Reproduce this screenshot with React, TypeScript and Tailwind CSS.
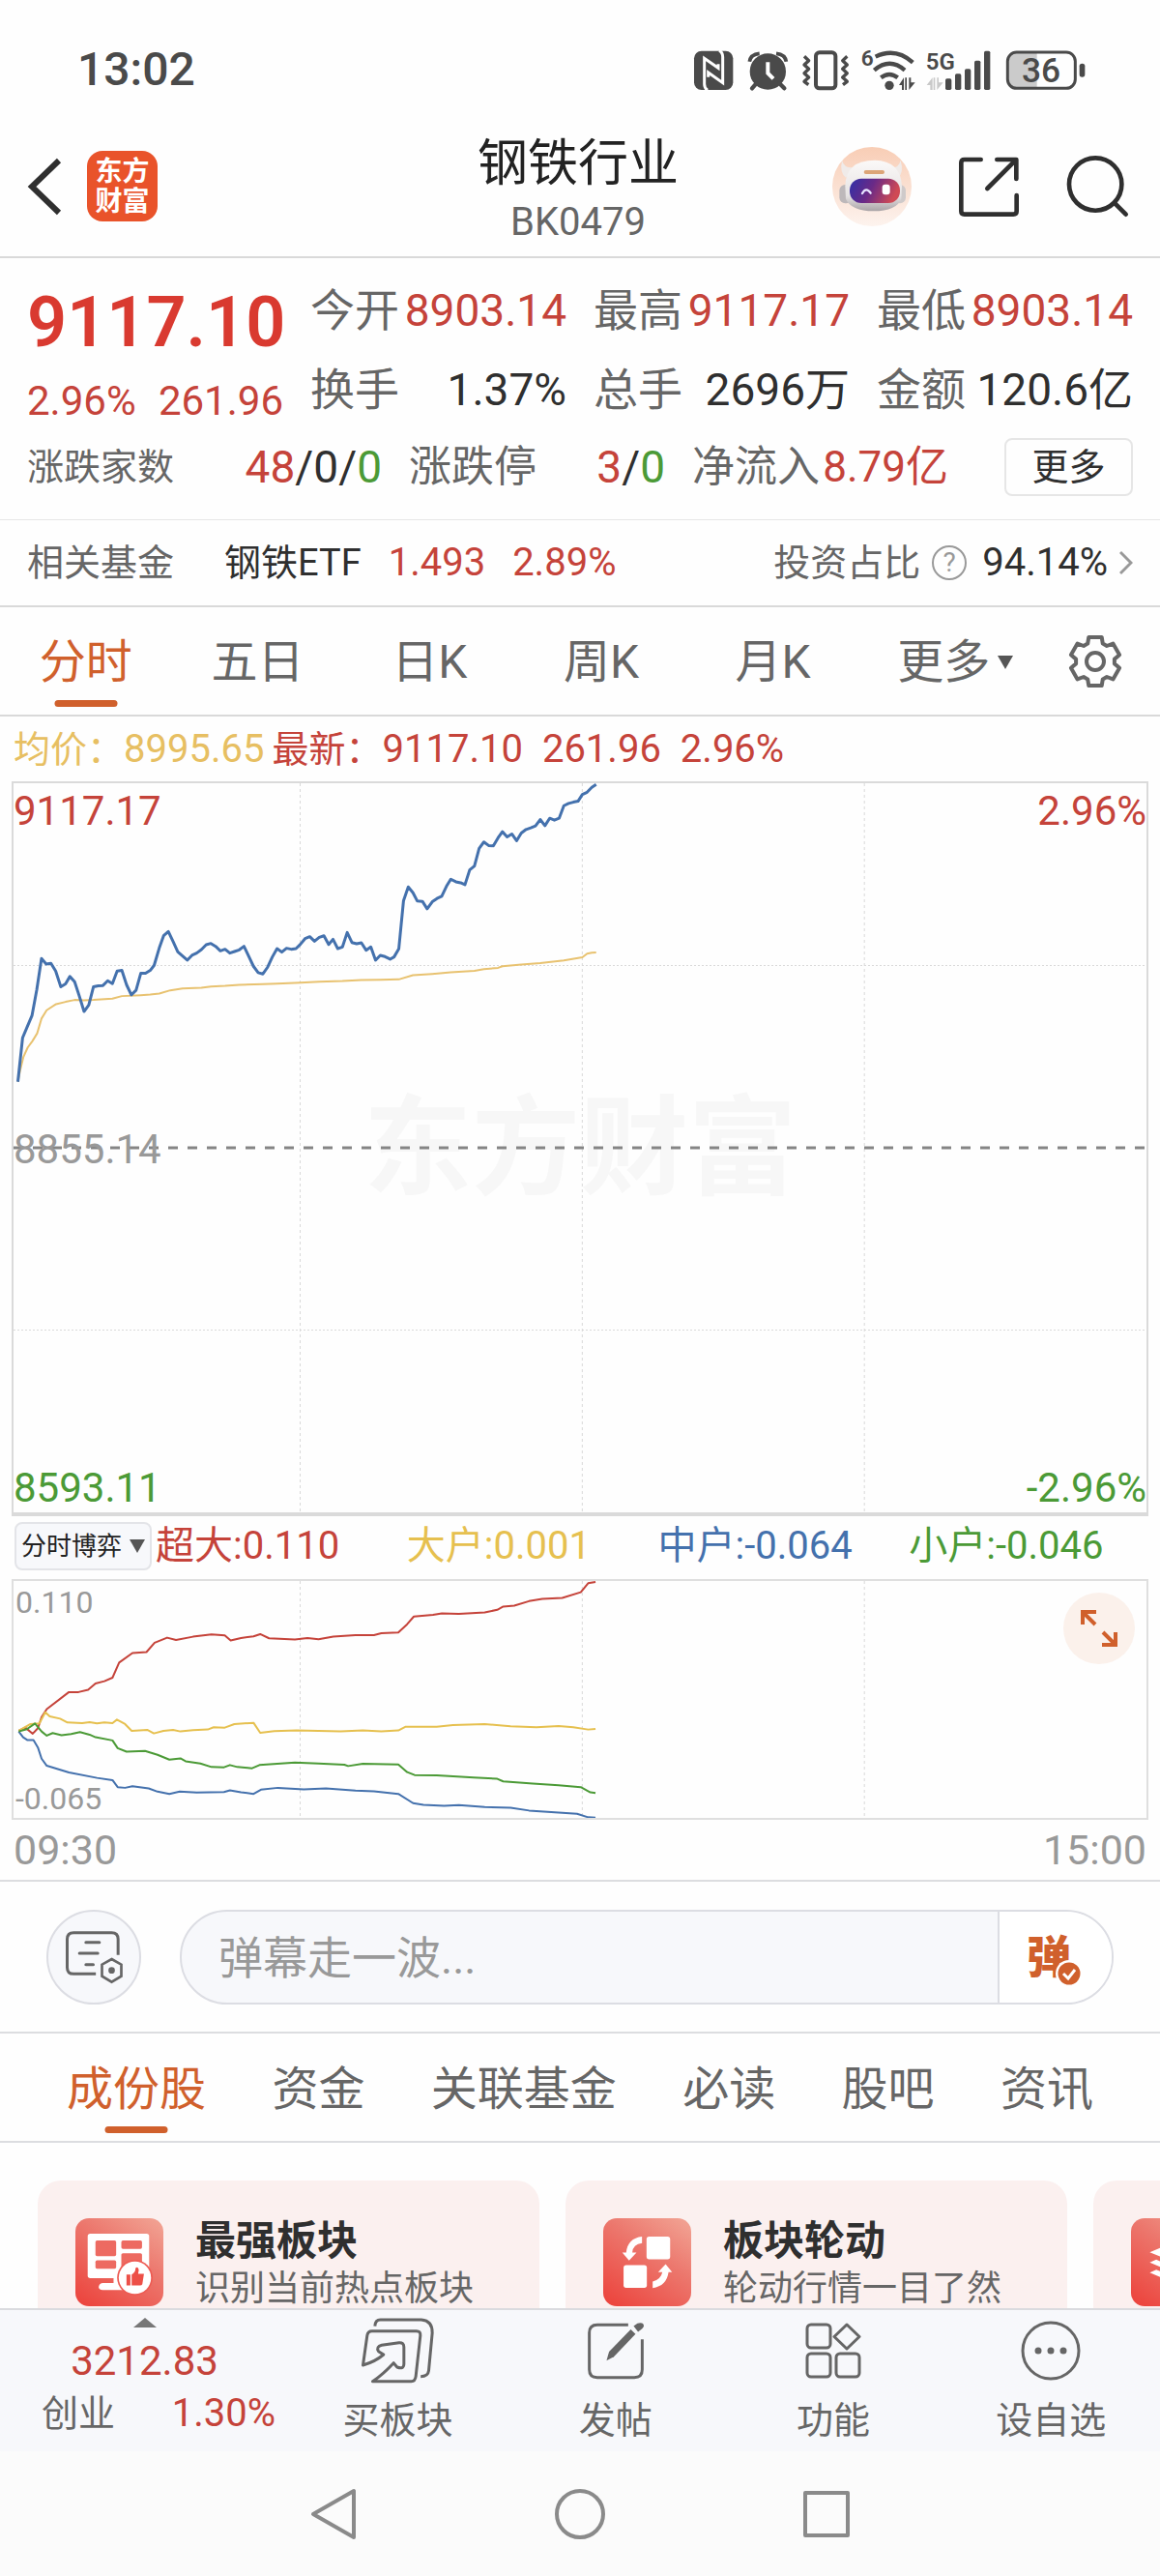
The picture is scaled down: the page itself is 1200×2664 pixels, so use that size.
import React from "react";

type Tone = "red" | "dark";

const toneClass: Record<Tone, string> = {
  red: "text-[#c5433a]",
  dark: "text-[#2f2f2f]",
};

/* ---------- data ---------- */

const stats: { label: string; value: string; tone: Tone }[][] = [
  [
    { label: "今开", value: "8903.14", tone: "red" },
    { label: "换手", value: "1.37%", tone: "dark" },
  ],
  [
    { label: "最高", value: "9117.17", tone: "red" },
    { label: "总手", value: "2696万", tone: "dark" },
  ],
  [
    { label: "最低", value: "8903.14", tone: "red" },
    { label: "金额", value: "120.6亿", tone: "dark" },
  ],
];

const periods = ["分时", "五日", "日K", "周K", "月K"];
const sections = ["成份股", "资金", "关联基金", "必读", "股吧", "资讯"];

const pricePoints =
  "43,957 55,820 67,785 79,750 91,670 103,573 115,590 127,588 139,612 152,661 164,652 175,629 187,645 199,690 211,738 223,718 235,661 247,658 259,657 271,642 283,651 295,612 307,610 319,655 331,686 343,672 355,619 367,619 379,610 389,594 402,540 413,502 425,489 437,520 449,552 461,565 473,578 485,563 497,556 509,545 521,530 533,526 545,535 557,549 569,544 581,556 593,551 605,546 617,535 629,566 641,597 653,617 665,621 677,600 689,568 701,542 713,553 725,541 737,544 749,542 760,529 772,511 784,505 796,519 808,507 820,502 832,529 843,513 855,542 867,537 879,492 891,523 903,527 915,524 927,547 939,537 951,578 963,563 975,567 988,575 998,568 1010,543 1022,393 1034,350 1046,368 1057,394 1070,395 1082,418 1095,396 1107,386 1119,379 1131,348 1142,326 1155,334 1167,337 1178,343 1190,297 1202,285 1214,230 1226,210 1238,221 1250,222 1262,197 1273,178 1285,194 1297,185 1309,206 1321,182 1333,171 1345,166 1357,160 1369,140 1381,159 1393,136 1405,142 1417,136 1429,97 1441,90 1453,86 1465,83 1476,62 1488,55 1500,40 1511,31";
const averagePoints =
  "43,957 49,920 57,880 68,850 80,830 92,806 103,760 116,734 140,715 164,708 187,702 211,703 235,702 283,698 307,690 355,687 379,685 402,682 430,672 461,666 509,664 533,660 569,658 605,655 665,653 701,651 760,648 808,645 867,643 915,640 963,639 1010,638 1046,625 1095,621 1142,616 1202,611 1226,606 1262,602 1273,597 1321,592 1369,587 1429,579 1476,569 1488,558 1500,555 1511,554";

const flows = [
  {
    label: "超大:0.110",
    text: "text-[#c5433a]",
    stroke: "#c5433a",
    points:
      "24,688 33,678 43,697 50,680 55,645 62,620 92,567 105,567 118,560 128,540 140,533 151,522 160,475 178,445 197,442 208,413 225,397 237,404 260,394 285,387 303,390 311,406 325,398 342,393 351,386 363,399 398,403 415,398 430,402 450,394 480,389 505,389 515,383 538,381 550,355 559,331 585,326 597,321 620,323 655,318 672,310 680,300 695,297 715,283 733,276 760,273 785,255 795,227 805,223",
  },
  {
    label: "大户:0.001",
    text: "text-[#e6c04f]",
    stroke: "#e6c04f",
    points:
      "24,688 40,667 52,665 60,630 66,643 80,650 90,662 110,664 120,661 130,665 140,662 151,664 157,653 168,667 177,688 198,685 207,696 220,688 233,685 243,690 260,686 280,684 288,677 303,678 316,667 342,663 351,694 370,689 400,687 430,688 460,690 490,687 515,690 538,687 548,675 590,675 612,670 655,667 690,674 725,677 755,673 775,677 795,684 805,682",
  },
  {
    label: "中户:-0.064",
    text: "text-[#4471ad]",
    stroke: "#4471ad",
    points:
      "24,690 30,708 36,717 44,717 50,740 55,775 62,797 92,818 130,835 151,842 158,864 168,866 178,861 200,868 212,878 228,885 242,878 265,881 302,879 310,874 325,880 342,885 352,872 375,866 410,871 440,868 480,875 505,877 538,885 558,914 572,919 600,922 620,920 655,926 690,928 715,937 780,947 795,958 805,959",
  },
  {
    label: "小户:-0.046",
    text: "text-[#4b9a36]",
    stroke: "#4b9a36",
    points:
      "24,690 35,683 46,665 55,690 62,703 70,695 82,702 95,698 107,692 120,700 128,708 151,718 158,742 170,753 195,751 212,763 228,778 243,774 250,783 270,790 285,801 302,802 310,795 320,801 340,805 350,795 398,787 430,790 465,794 470,798 490,791 538,793 550,817 560,826 590,827 640,834 672,838 680,846 720,853 755,858 785,864 798,880 805,882",
  },
];

/* ---------- icons ---------- */

function StatusIcons() {
  const bars = [
    [895, 183],
    [925, 168],
    [955, 153],
    [985, 127],
    [1015, 97],
  ];
  return (
    <svg viewBox="100 80 1260 150" className="h-[50px] w-[420px]" fill="none" aria-hidden="true">
      <rect x="115" y="97" width="121" height="121" rx="23" fill="#4a4a4a" />
      <path d="M157 219Q147 213 147 200V120L190 150V138" stroke="#fff" strokeWidth="9" />
      <path d="M193 96Q204 101 204 116V196L159 164V178" stroke="#fff" strokeWidth="9" />
      <circle cx="344" cy="161" r="56" fill="#4a4a4a" />
      <path d="M287 130Q290 108 318 105M401 130Q398 108 370 105" stroke="#4a4a4a" strokeWidth="11" />
      <path d="M308 198L295 213M380 198L395 213" stroke="#4a4a4a" strokeWidth="13" strokeLinecap="round" />
      <path d="M344 132V166L361 183" stroke="#fff" strokeWidth="12" />
      <rect x="493" y="102" width="61" height="111" rx="11" stroke="#4a4a4a" strokeWidth="12" />
      <path d="M457 114L471 127 457 140 471 153 457 166 471 179 457 192 470 202" stroke="#4a4a4a" strokeWidth="10" strokeLinejoin="round" />
      <path d="M590 114L576 127 590 140 576 153 590 166 576 179 590 192 577 202" stroke="#4a4a4a" strokeWidth="10" strokeLinejoin="round" />
      <text x="633" y="143" fontSize="68" fontWeight="600" fill="#4a4a4a" fontFamily="Roboto">
        6
      </text>
      <g stroke="#4a4a4a" strokeWidth="13">
        <path d="M678 115Q740 85 794 133" />
        <path d="M674 157Q722 116 769 157" />
        <path d="M695 180Q721 160 747 180" />
      </g>
      <circle cx="721" cy="204" r="14" fill="#4a4a4a" />
      <path d="M766 180V218H760V203H751ZM782 218V180H788V195H801ZM770 180h5v38h-5z" fill="#4a4a4a" />
      <text x="834" y="156" fontSize="72" fontWeight="600" fill="#4a4a4a" fontFamily="Roboto">
        5G
      </text>
      <path d="M855 180V218H848V203H837ZM869 218V180H874V195H888ZM858 180h5v38h-5z" fill="#c9c9c9" />
      {bars.map(([x, y]) => (
        <rect key={x} x={x} y={y} width="19" height={218 - y} rx="5" fill="#4a4a4a" />
      ))}
      <path d="M1179 104V211H1117Q1092 211 1092 186V129Q1092 104 1117 104Z" fill="#cbcbcb" />
      <rect x="1088" y="101" width="210" height="112" rx="28" stroke="#4a4a4a" strokeWidth="9" />
      <rect x="1311" y="136" width="17" height="42" rx="8" fill="#4a4a4a" />
      <text x="1192" y="195" fontSize="106" fontWeight="500" fill="#4a4a4a" textAnchor="middle" fontFamily="Roboto">
        36
      </text>
    </svg>
  );
}

function RobotIcon() {
  return (
    <svg viewBox="552 399 246 246" className="size-[82px]" aria-hidden="true">
      <defs>
        <linearGradient id="peach" x1="0" y1="0" x2="0" y2="1">
          <stop offset="0" stopColor="#f8cdb5" />
          <stop offset="1" stopColor="#fdf3ee" />
        </linearGradient>
        <linearGradient id="visor" x1="0" y1="0" x2="1" y2="0.25">
          <stop offset="0" stopColor="#2f2fa8" />
          <stop offset="0.5" stopColor="#6b2a86" />
          <stop offset="1" stopColor="#cf4a55" />
        </linearGradient>
        <linearGradient id="head" x1="0" y1="0" x2="0" y2="1">
          <stop offset="0" stopColor="#fbf9f8" />
          <stop offset="0.7" stopColor="#e6e3e3" />
          <stop offset="1" stopColor="#a9a3a6" />
        </linearGradient>
      </defs>
      <circle cx="675" cy="522" r="123" fill="url(#peach)" />
      <path d="M582 440Q574 478 594 494L622 462Q590 468 582 440ZM764 440Q775 478 756 494L726 462Q758 468 764 440Z" fill="#f0ebe9" />
      <rect x="574" y="516" width="40" height="58" rx="18" fill="#bdb8ba" />
      <rect x="744" y="516" width="36" height="58" rx="18" fill="#cfcaca" />
      <path d="M592 520Q594 440 684 440Q764 442 768 520L766 560Q752 597 680 598Q610 597 594 560Z" fill="url(#head)" />
      <rect x="650" y="471" width="64" height="12" rx="6" fill="#dca578" />
      <rect x="606" y="497" width="156" height="76" rx="36" fill="url(#visor)" />
      <path d="M645 543Q657 522 671 542" stroke="#e7e4ff" strokeWidth="7" fill="none" strokeLinecap="round" />
      <rect x="707" y="515" width="24" height="32" rx="9" fill="#fff" />
    </svg>
  );
}

function GearIcon() {
  const pts: string[] = [];
  for (let i = 0; i < 6; i++) {
    const a = i * 60 - 90;
    for (const [r, d] of [
      [20, -23],
      [26, -15],
      [26, 15],
      [20, 23],
    ]) {
      const t = ((a + d) * Math.PI) / 180;
      pts.push(`${(30 + r * Math.cos(t)).toFixed(1)},${(30 + r * Math.sin(t)).toFixed(1)}`);
    }
  }
  return (
    <svg viewBox="0 0 60 60" className="size-[60px]" fill="none" stroke="#666" strokeWidth="4" strokeLinejoin="round" aria-hidden="true">
      <polygon points={pts.join(" ")} />
      <circle cx="30" cy="30" r="9" />
    </svg>
  );
}

function Tile({ children }: { children: React.ReactNode }) {
  return (
    <svg viewBox="0 0 272 272" className="size-[91px] shrink-0" aria-hidden="true">
      <defs>
        <linearGradient id="tile" x1="0.15" y1="1" x2="0.85" y2="0">
          <stop offset="0" stopColor="#ec463f" />
          <stop offset="0.6" stopColor="#ec776d" />
          <stop offset="1" stopColor="#f19f90" />
        </linearGradient>
      </defs>
      <rect width="272" height="272" rx="42" fill="url(#tile)" />
      {children}
    </svg>
  );
}

const cards = [
  {
    title: "最强板块",
    note: "识别当前热点板块",
    art: (
      <>
        <rect x="38" y="48" width="190" height="137" rx="8" fill="#fff" />
        <path d="M118 184V200H84Q72 202 72 214 74 222 84 222H150V184Z" fill="#fff" />
        <g fill="#ed6a61">
          <rect x="62" y="69" width="64" height="48" rx="5" />
          <rect x="62" y="130" width="64" height="26" rx="5" />
          <rect x="142" y="69" width="64" height="26" rx="5" />
          <path d="M147 108H201Q206 108 206 113V160H142V113Q142 108 147 108Z" />
        </g>
        <circle cx="184" cy="184" r="55" fill="#ed5a52" />
        <circle cx="184" cy="184" r="50" fill="#fff" />
        <path d="M158 174H170V208H158ZM174 174Q186 168 186 154 194 148 196 160L194 172H212L207 204Q205 208 200 208H174Z" fill="#ed4f47" />
      </>
    ),
  },
  {
    title: "板块轮动",
    note: "轮动行情一目了然",
    art: (
      <g fill="#fff">
        <rect x="134" y="57" width="73" height="70" rx="8" />
        <rect x="63" y="145" width="72" height="70" rx="8" />
        <path d="M120 57V77Q92 80 90 106H103L80 131 59 106H71Q76 62 120 57Z" />
        <path d="M153 216V196Q178 190 183 167H170L193 142 213 167H202Q196 210 153 216Z" />
      </g>
    ),
  },
  {
    title: "",
    note: "",
    art: (
      <g fill="#fff">
        <path d="M136 72L214 105 136 138 58 105Z" />
        <path d="M58 137L78 128 136 152 194 128 214 137 136 170Z" />
        <path d="M58 168L78 159 136 183 194 159 214 168 136 201Z" />
      </g>
    ),
  },
];

const actions = [
  {
    label: "买板块",
    icon: (
      <svg viewBox="95 378 230 210" className="h-[70px] w-[77px]" fill="none" stroke="#666" strokeWidth="9" strokeLinejoin="round" aria-hidden="true">
        <path d="M139 407Q140 387 156 387H283Q318 390 317 428L306 545Q304 563 281 563" />
        <path d="M102 528L115 436Q117 422 130 422H268Q281 422 280 436L266 562Q264 578 252 578H132Q165 556 197 521L208 534Q228 542 229 525V472Q229 457 214 458L160 466Q142 470 150 485L166 495Q140 517 102 528Z" />
      </svg>
    ),
  },
  {
    label: "发帖",
    icon: (
      <svg viewBox="797 388 182 182" className="size-[60px]" fill="none" stroke="#666" strokeWidth="9" aria-hidden="true">
        <path d="M927 398H830Q805 398 805 423V538Q805 563 830 563H946Q971 563 971 538V443" />
        <path d="M935 412L950 427 882 498 859 510 867 482Z" fill="#666" stroke="none" />
        <path d="M944 402L956 393Q976 388 976 402 976 408 958 420Z" fill="#666" stroke="none" />
      </svg>
    ),
  },
  {
    label: "功能",
    icon: (
      <svg viewBox="0 0 58 58" className="size-[58px]" fill="none" stroke="#666" strokeWidth="3" strokeLinejoin="round" aria-hidden="true">
        <rect x="2" y="2" width="24" height="24" rx="4" />
        <rect x="2" y="32" width="24" height="24" rx="4" />
        <rect x="32" y="32" width="24" height="24" rx="4" />
        <path d="M43 2L56 14.500 43 27 30 14.500Z" />
      </svg>
    ),
  },
  {
    label: "设自选",
    icon: (
      <svg viewBox="0 0 62 62" className="size-[62px]" fill="none" stroke="#666" strokeWidth="3" aria-hidden="true">
        <circle cx="31" cy="31" r="29" />
        <g fill="#666" stroke="none">
          <circle cx="18" cy="31" r="3.500" />
          <circle cx="31" cy="31" r="3.500" />
          <circle cx="44" cy="31" r="3.500" />
        </g>
      </svg>
    ),
  },
];

/* ---------- chart pieces ---------- */

function Grid({ rows }: { rows: boolean }) {
  return (
    <svg className="absolute inset-0 h-full w-full" aria-hidden="true">
      <g stroke="#d9d9d9" strokeDasharray="3 3">
        <line x1="25.3%" x2="25.3%" y1="0" y2="100%" />
        <line x1="50.2%" x2="50.2%" y1="0" y2="100%" />
        <line x1="75.1%" x2="75.1%" y1="0" y2="100%" />
        {rows && (
          <>
            <line x1="0" x2="100%" y1="25%" y2="25%" strokeDasharray="2 2" />
            <line x1="0" x2="100%" y1="75%" y2="75%" strokeDasharray="2 2" />
          </>
        )}
      </g>
      {rows && <line x1="0" x2="100%" y1="50%" y2="50%" stroke="#858585" strokeWidth="3" strokeDasharray="10 10" />}
    </svg>
  );
}

function Line({ points, color, width }: { points: string; color: string; width: number }) {
  return (
    <polyline
      points={points}
      fill="none"
      stroke={color}
      strokeWidth={width}
      strokeLinejoin="round"
      vectorEffect="non-scaling-stroke"
    />
  );
}

/* ---------- page ---------- */

export default function App() {
  return (
    <div className="flex min-h-screen w-full flex-col overflow-hidden bg-[#fefefe] font-['Roboto','Noto_Sans_CJK_SC',sans-serif] text-[#666]">
      <div className="flex h-[120px] items-center justify-between pt-6 pr-[67px] pl-20">
        <span className="text-[48px] leading-none font-medium text-[#4a4a4a]">13:02</span>
        <StatusIcons />
      </div>

      <header className="grid h-[147px] grid-cols-[1fr_auto_1fr] items-center border-b-2 border-[#d9d9d9] pr-8 pl-7">
        <div className="flex items-center gap-[26px]">
          <button type="button" aria-label="返回">
            <svg viewBox="0 0 36 60" className="h-[60px] w-9" fill="none" stroke="#2f2f2f" strokeWidth="6">
              <path d="M33 3L5 30 33 57" />
            </svg>
          </button>
          <div className="flex size-[73px] flex-col items-center justify-center rounded-2xl bg-[#e9532a] text-[28px] leading-[31px] font-bold text-white">
            <span>东方</span>
            <span>财富</span>
          </div>
        </div>
        <div className="flex flex-col items-center pt-2">
          <h1 className="text-[52px] leading-[66px] text-[#222]">钢铁行业</h1>
          <p className="text-[40px] leading-[54px]">BK0479</p>
        </div>
        <div className="flex items-center justify-end gap-12">
          <button type="button" aria-label="智能助手">
            <RobotIcon />
          </button>
          <button type="button" aria-label="分享">
            <svg viewBox="930 425 192 192" className="size-16" fill="none" stroke="#2f2f2f" strokeWidth="14" strokeLinecap="round" strokeLinejoin="round">
              <path d="M1001 437H950Q940 437 940 447V597Q940 607 950 607H1102Q1112 607 1112 597V548" />
              <path d="M1051 437H1111V497M1106 442L1021 527" />
            </svg>
          </button>
          <button type="button" aria-label="搜索">
            <svg viewBox="1268 420 196 196" className="size-[65px]" fill="none" stroke="#2f2f2f" strokeWidth="14" strokeLinecap="round">
              <circle cx="1359" cy="512" r="82" />
              <path d="M1420 572L1454 606" />
            </svg>
          </button>
        </div>
      </header>

      <section className="border-b border-[#e6e6e6] px-7 pt-[27px] pb-6 text-[46px] leading-[54px]">
        <div className="grid grid-cols-4 gap-7">
          <div className="flex flex-col gap-4 text-[#c5433a]">
            <strong className="text-[72px] leading-[80px] font-semibold text-[#d93a30]">9117.10</strong>
            <div className="flex justify-between text-[42px] leading-[50px]">
              <span>2.96%</span>
              <span>261.96</span>
            </div>
          </div>
          {stats.map((col) => (
            <dl key={col[0].label} className="flex flex-col gap-7">
              {col.map((s) => (
                <div key={s.label} className="flex justify-between whitespace-nowrap">
                  <dt>{s.label}</dt>
                  <dd className={toneClass[s.tone]}>{s.value}</dd>
                </div>
              ))}
            </dl>
          ))}
        </div>
        <div className="mt-[13px] grid grid-cols-[367fr_265fr_265fr_163fr] items-center gap-7 whitespace-nowrap text-[#2f2f2f]">
          <div className="flex items-center justify-between">
            <span className="text-[38px] text-[#666]">涨跌家数</span>
            <span>
              <span className="text-[#c5433a]">48</span>/0/<span className="text-[#4b9a36]">0</span>
            </span>
          </div>
          <div className="flex items-center justify-between">
            <span className="text-[44px] text-[#666]">涨跌停</span>
            <span>
              <span className="text-[#c5433a]">3</span>/<span className="text-[#4b9a36]">0</span>
            </span>
          </div>
          <div className="flex items-center justify-between">
            <span className="text-[44px] text-[#666]">净流入</span>
            <span className="text-[44px] text-[#c5433a]">8.79亿</span>
          </div>
          <button type="button" className="h-[60px] w-[133px] justify-self-end rounded-lg border-2 border-[#e6e6e6] text-[38px] leading-none">
            更多
          </button>
        </div>
      </section>

      <section className="flex h-[90px] items-center border-b-2 border-[#d9d9d9] px-7 text-[38px] leading-[50px] whitespace-nowrap">
        <span>相关基金</span>
        <a href="#etf" className="ml-[52px] flex items-center gap-7 text-[#2f2f2f]">
          钢铁ETF
          <span className="text-[40px] text-[#c5433a]">1.493</span>
          <span className="text-[40px] text-[#c5433a]">2.89%</span>
        </a>
        <a href="#ratio" className="ml-auto flex items-center">
          投资占比
          <span className="mr-4 ml-3 flex size-9 items-center justify-center rounded-full border-2 border-[#999] text-[28px] leading-none text-[#999]">
            ?
          </span>
          <span className="text-[40px] text-[#2f2f2f]">94.14%</span>
          <svg viewBox="0 0 14 26" className="ml-3 h-[26px] w-3.5" fill="none" stroke="#999" strokeWidth="3" aria-hidden="true">
            <path d="M1 2L12 13 1 24" />
          </svg>
        </a>
      </section>

      <nav className="grid h-[113px] grid-cols-[178fr_178fr_178fr_178fr_178fr_200fr_90fr] border-b-2 border-[#d9d9d9] pr-[22px] text-[48px] leading-none">
        {periods.map((p, i) => (
          <button key={p} type="button" className={i === 0 ? "relative pt-0.5 text-[#d0602c]" : "relative pt-0.5"}>
            {p}
            {i === 0 && <span className="absolute bottom-2 left-1/2 h-[7px] w-[65px] -translate-x-1/2 rounded-full bg-[#d0602c]" />}
          </button>
        ))}
        <button type="button" className="flex items-center justify-center gap-2 pt-0.5">
          更多
          <svg viewBox="0 0 16 14" className="h-3.5 w-4" fill="#555" aria-hidden="true">
            <path d="M0 0H16L8 14Z" />
          </svg>
        </button>
        <button type="button" aria-label="设置" className="flex items-center justify-center">
          <GearIcon />
        </button>
      </nav>

      <div className="flex h-[67px] items-center pl-3.5 text-[40px] leading-none whitespace-nowrap text-[#c5433a]">
        <span className="mr-2 text-[#e7bf62]">
          <span className="text-[38px]">均价：</span>8995.65
        </span>
        <span className="mr-5">
          <span className="text-[38px]">最新：</span>9117.10
        </span>
        <span className="mr-5">261.96</span>
        <span>2.96%</span>
      </div>

      <section className="relative mx-3 h-[760px] border-2 border-b-4 border-[#dadada] text-[42px] leading-none">
        <div className="absolute inset-0 flex items-center justify-center pt-1 text-[112px] font-bold text-[#f7f7f7]">东方财富</div>
        <Grid rows />
        <svg viewBox="32 27 2876 2271" preserveAspectRatio="none" className="absolute inset-0 h-full w-full" aria-label="分时走势">
          <Line points={averagePoints} color="#e8c270" width={2} />
          <Line points={pricePoints} color="#4471ad" width={3} />
        </svg>
        <div className="relative flex h-full flex-col justify-between pt-2 pb-1">
          <div className="flex items-center justify-between text-[#c5433a]">
            <span>9117.17</span>
            <span>2.96%</span>
          </div>
          <span className="text-[#999]">8855.14</span>
          <div className="flex items-center justify-between text-[#4b9a36]">
            <span>8593.11</span>
            <span>-2.96%</span>
          </div>
        </div>
      </section>

      <div className="flex h-[65px] items-center pb-1 pl-[15px] text-[40px] leading-none whitespace-nowrap">
        <button type="button" className="flex h-[50px] w-[142px] items-center justify-center gap-2 rounded-lg border-2 border-[#e3e4e8] bg-[#f7f8fb] text-[26px] text-[#222]">
          分时博弈
          <svg viewBox="0 0 16 14" className="h-3.5 w-4" fill="#555" aria-hidden="true">
            <path d="M0 0H16L8 14Z" />
          </svg>
        </button>
        <div className="ml-1 grid flex-1 grid-cols-4">
          {flows.map((f) => (
            <span key={f.label} className={f.text}>
              {f.label}
            </span>
          ))}
        </div>
      </div>

      <section className="relative mx-3 h-[249px] border-2 border-[#dfdfdf] text-[32px] leading-none text-[#999]">
        <Grid rows={false} />
        <svg viewBox="17 220 1534 740" preserveAspectRatio="none" className="absolute inset-0 h-full w-full" aria-label="资金博弈走势">
          {flows.map((f) => (
            <Line key={f.label} points={f.points} color={f.stroke} width={2} />
          ))}
        </svg>
        <div className="relative flex h-full flex-col justify-between px-0.5 pt-1.5 pb-1">
          <span>0.110</span>
          <span>-0.065</span>
        </div>
        <button type="button" aria-label="全屏" className="absolute top-3 right-3 flex size-[74px] items-center justify-center rounded-full bg-[#fbf1eb]">
          <svg viewBox="0 0 38 38" className="size-[38px]" fill="none" stroke="#d0602c" strokeWidth="4">
            <path d="M2 15V2H16M3 3L15 15M36 23V36H22M35 35L23 23" />
          </svg>
        </button>
      </section>

      <div className="flex h-16 items-center justify-between border-b-2 border-[#dcdde0] px-3.5 text-[43px] leading-none text-[#999]">
        <span>09:30</span>
        <span>15:00</span>
      </div>

      <section className="flex h-[157px] items-center border-b-2 border-[#dcdde0] px-12">
        <button type="button" aria-label="弹幕设置" className="flex size-[98px] items-center justify-center rounded-full border-2 border-[#dcdde3] bg-[#f7f8fb]">
          <svg viewBox="88 118 182 168" className="h-14 w-[61px]" fill="none" stroke="#666" strokeWidth="9">
            <path d="M184 254H115Q95 254 95 234V146Q95 126 115 126H233Q253 126 253 146V195" />
            <path d="M153 156H195M133 190H190M153 225H176" strokeLinecap="round" />
            <path d="M233 208L263 225V261L233 279 203 261V225Z" strokeWidth="8" />
            <circle cx="233" cy="243" r="10" fill="#666" stroke="none" />
          </svg>
        </button>
        <div className="ml-10 flex h-[98px] flex-1 overflow-hidden rounded-full border-2 border-[#dcdde3] bg-[#f7f8fb]">
          <input
            type="text"
            aria-label="弹幕"
            placeholder="弹幕走一波..."
            className="min-w-0 flex-1 bg-transparent pt-0.5 pl-[38px] text-[46px] leading-none outline-none placeholder:text-[#999]"
          />
          <button type="button" aria-label="弹幕开关" className="flex w-[118px] items-center border-l-2 border-[#dcdde3] bg-white pl-7">
            <span className="relative text-[46px] leading-none font-black text-[#d0602c]">
              弹
              <svg viewBox="0 0 28 28" className="absolute -right-3 -bottom-2 size-7" fill="none" aria-hidden="true">
                <circle cx="14" cy="14" r="14" fill="#fff" />
                <circle cx="14" cy="14" r="11.500" fill="#d0602c" />
                <path d="M8 14L13 19 20 10" stroke="#fff" strokeWidth="3" />
              </svg>
            </span>
          </button>
        </div>
      </section>

      <nav className="flex h-[113px] justify-between border-b-2 border-[#dcdde0] px-[69px] text-[48px] leading-none whitespace-nowrap">
        {sections.map((s, i) => (
          <button key={s} type="button" className={i === 0 ? "relative pt-1 text-[#d0602c]" : "relative pt-1"}>
            {s}
            {i === 0 && <span className="absolute bottom-2 left-1/2 h-[7px] w-[65px] -translate-x-1/2 rounded-full bg-[#d0602c]" />}
          </button>
        ))}
      </nav>

      <section className="flex h-[171px] gap-[27px] overflow-hidden pt-[39px] pl-[39px]">
        {cards.map((c, i) => (
          <a key={i} href="#card" className="flex h-[169px] w-[519px] shrink-0 items-start gap-[33px] rounded-3xl bg-[#fbf0ef] px-[39px] pt-[39px] whitespace-nowrap">
            <Tile>{c.art}</Tile>
            {c.title && (
              <span className="flex flex-col gap-1.5">
                <strong className="text-[42px] leading-[48px] font-bold text-[#2f2f2f]">{c.title}</strong>
                <span className="text-[36px] leading-[38px]">{c.note}</span>
              </span>
            )}
          </a>
        ))}
      </section>

      <footer className="flex h-[148px] border-t-2 border-[#dadbdf] bg-[#f7f8fb] text-[38px] leading-[50px]">
        <button type="button" className="flex w-[299px] shrink-0 flex-col items-center pt-2 text-[#c5433a]">
          <svg viewBox="0 0 24 10" className="h-2.5 w-6" fill="#777" aria-hidden="true">
            <path d="M12 0L24 10H0Z" />
          </svg>
          <span className="mt-2.5 text-[42px]">3212.83</span>
          <span className="mt-1 flex w-full justify-between pr-3.5 pl-[43px]">
            <span className="text-[#666]">创业</span>
            <span className="text-[40px]">1.30%</span>
          </span>
        </button>
        {actions.map((a) => (
          <button key={a.label} type="button" className="flex flex-1 flex-col items-center gap-3 pt-[7px]">
            <span className="flex h-[70px] items-center">{a.icon}</span>
            {a.label}
          </button>
        ))}
      </footer>

      <div className="flex flex-1 items-center justify-center bg-[#fbfbfb]">
        <button type="button" aria-label="后退" className="flex w-[255px] justify-center">
          <svg viewBox="0 0 56 56" className="size-14" fill="none" stroke="#8a8a8a" strokeWidth="4" strokeLinejoin="round">
            <path d="M49 4V52L7 28Z" />
          </svg>
        </button>
        <button type="button" aria-label="主屏幕" className="flex w-[255px] justify-center">
          <svg viewBox="0 0 56 56" className="size-14" fill="none" stroke="#8a8a8a" strokeWidth="4">
            <circle cx="28" cy="28" r="24" />
          </svg>
        </button>
        <button type="button" aria-label="最近任务" className="flex w-[255px] justify-center">
          <svg viewBox="0 0 56 56" className="size-14" fill="none" stroke="#8a8a8a" strokeWidth="4" strokeLinejoin="round">
            <rect x="6" y="6" width="44" height="44" />
          </svg>
        </button>
      </div>
    </div>
  );
}
